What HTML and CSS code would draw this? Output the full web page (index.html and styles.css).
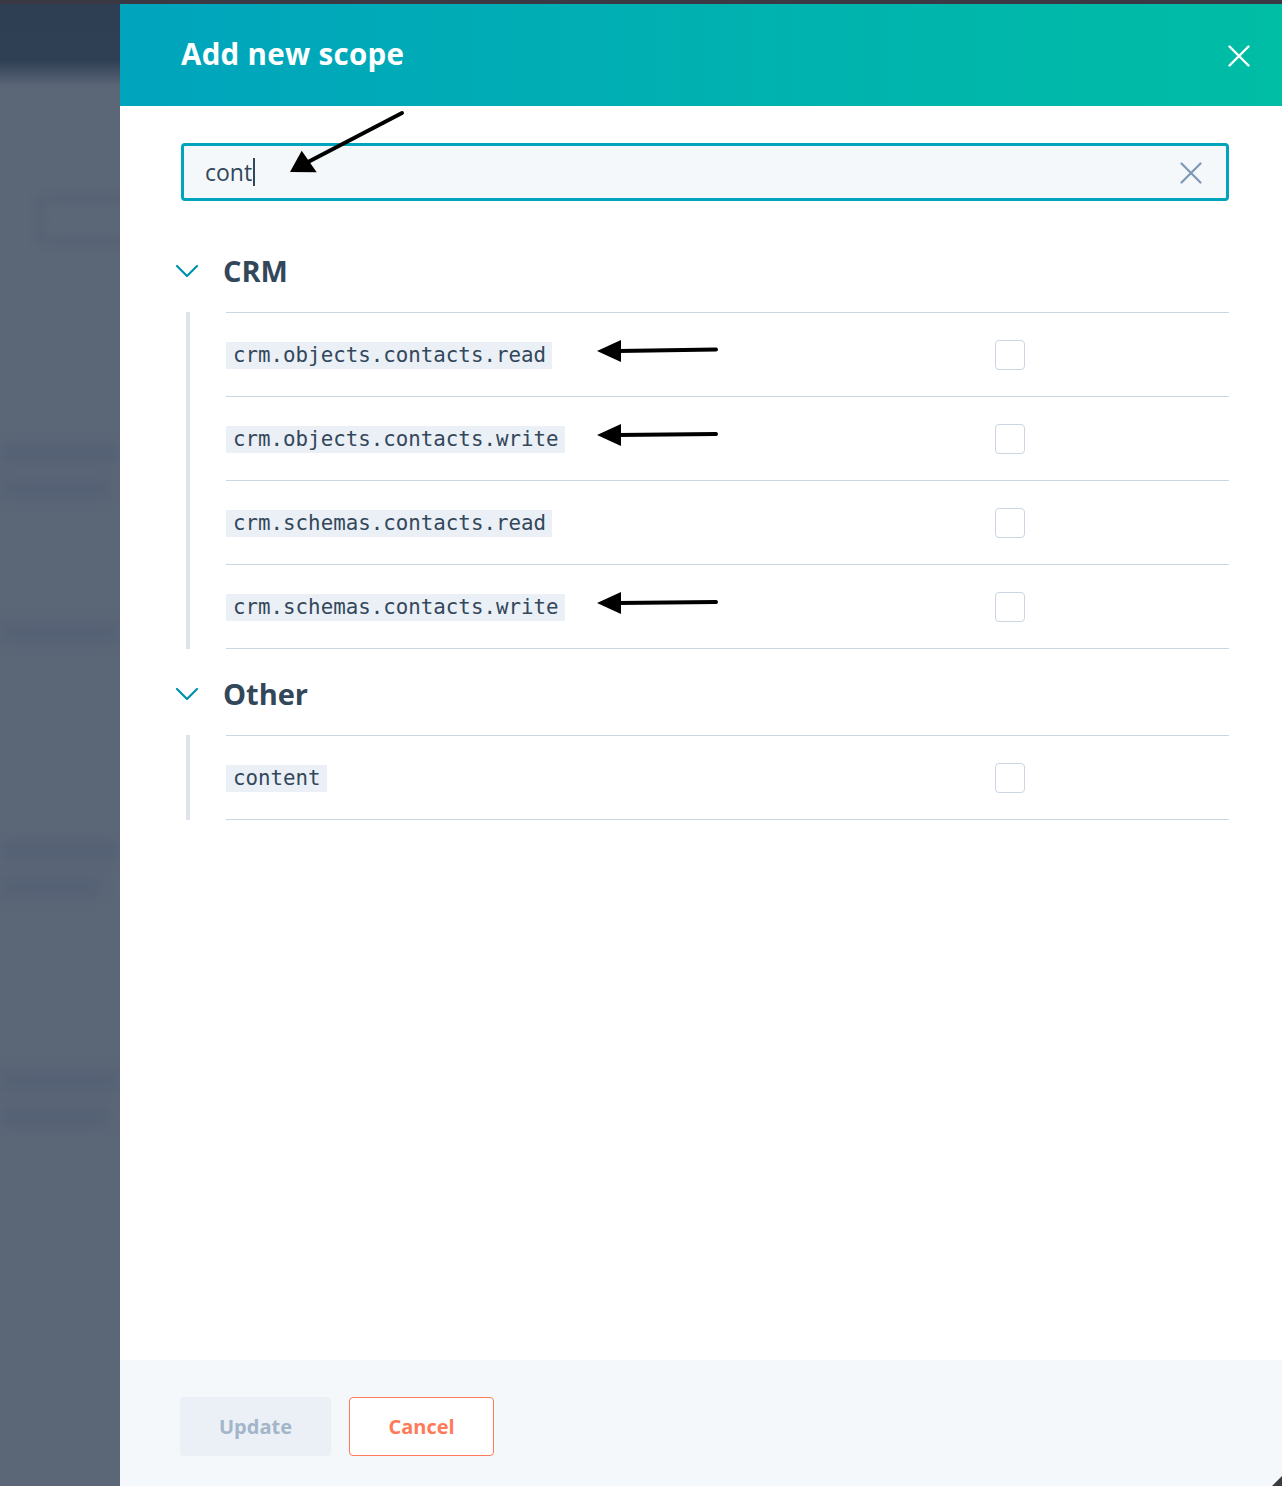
FILE: index.html
```html
<!DOCTYPE html>
<html lang="en">
<head>
<meta charset="utf-8">
<title>Add new scope</title>
<link rel="stylesheet" href="styles.css">
</head>
<body>
<div class="window-bar"></div>
<div class="screen">
  <aside class="backdrop" aria-hidden="true">
    <div class="ghost ghost-btn"></div>
    <div class="ghost ghost-line" style="width: 120px; margin-top: 203px"></div>
    <div class="ghost ghost-line" style="width: 110px; margin-top: 22px"></div>
    <div class="ghost ghost-line" style="width: 120px; margin-top: 130px"></div>
    <div class="ghost ghost-line" style="width: 120px; margin-top: 204px"></div>
    <div class="ghost ghost-line" style="width: 100px; margin-top: 22px"></div>
    <div class="ghost ghost-line" style="width: 120px; margin-top: 180px"></div>
    <div class="ghost ghost-line" style="width: 110px; margin-top: 22px"></div>
  </aside>

  <section class="modal">
    <header class="modal-header">
      <h1 class="modal-title">Add new scope</h1>
      <button class="icon-btn close-btn" type="button" aria-label="Close">
        <svg width="22" height="22" viewBox="0 0 22 22"><path d="M1.5 1.5 L20.5 20.5 M20.5 1.5 L1.5 20.5" stroke="#fff" stroke-width="2.4" stroke-linecap="round"/></svg>
      </button>
    </header>

    <div class="modal-body">
      <div class="search">
        <span class="search-value">cont</span><span class="caret"></span>
        <button class="icon-btn clear-btn" type="button" aria-label="Clear">
          <svg width="22" height="22" viewBox="0 0 22 22"><path d="M1.5 1.5 L20.5 20.5 M20.5 1.5 L1.5 20.5" stroke="#7c98b6" stroke-width="2.2" stroke-linecap="round"/></svg>
        </button>
        <svg class="callout callout-search" width="130" height="70" viewBox="0 0 130 70">
          <path d="M121 5 L27 54" stroke="#000" stroke-width="4" stroke-linecap="round"/>
          <path d="M9 64 L20.7 42.7 L35.7 64.3 Z" fill="#000"/>
        </svg>
      </div>

      <div class="group">
        <div class="group-head">
          <svg class="chevron" width="24" height="14" viewBox="0 0 24 14"><path d="M2 2 L12 12 L22 2" fill="none" stroke="#0091ae" stroke-width="2.2" stroke-linecap="round" stroke-linejoin="round"/></svg>
          <h2 class="group-title">CRM</h2>
        </div>
        <ul class="scope-list">
          <li class="scope-row">
            <code class="scope-code">crm.objects.contacts.read</code>
            <svg class="callout callout-row" width="124" height="28" viewBox="0 0 124 28"><path d="M22 14 L120 12.5" stroke="#000" stroke-width="4" stroke-linecap="round"/><path d="M1 14 L25 3 L25 25 Z" fill="#000"/></svg>
            <span class="checkbox"></span>
          </li>
          <li class="scope-row">
            <code class="scope-code">crm.objects.contacts.write</code>
            <svg class="callout callout-row" width="124" height="28" viewBox="0 0 124 28"><path d="M22 14 L120 13" stroke="#000" stroke-width="4" stroke-linecap="round"/><path d="M1 14 L25 3 L25 25 Z" fill="#000"/></svg>
            <span class="checkbox"></span>
          </li>
          <li class="scope-row">
            <code class="scope-code">crm.schemas.contacts.read</code>
            <span class="checkbox"></span>
          </li>
          <li class="scope-row">
            <code class="scope-code">crm.schemas.contacts.write</code>
            <svg class="callout callout-row" width="124" height="28" viewBox="0 0 124 28"><path d="M22 14 L120 13" stroke="#000" stroke-width="4" stroke-linecap="round"/><path d="M1 14 L25 3 L25 25 Z" fill="#000"/></svg>
            <span class="checkbox"></span>
          </li>
        </ul>
      </div>

      <div class="group">
        <div class="group-head">
          <svg class="chevron" width="24" height="14" viewBox="0 0 24 14"><path d="M2 2 L12 12 L22 2" fill="none" stroke="#0091ae" stroke-width="2.2" stroke-linecap="round" stroke-linejoin="round"/></svg>
          <h2 class="group-title">Other</h2>
        </div>
        <ul class="scope-list">
          <li class="scope-row">
            <code class="scope-code">content</code>
            <span class="checkbox"></span>
          </li>
        </ul>
      </div>
    </div>

    <footer class="modal-footer">
      <button class="btn btn-primary" type="button" disabled>Update</button>
      <button class="btn btn-secondary" type="button">Cancel</button>
      <svg class="resize-grip" width="10" height="10" viewBox="0 0 10 10"><path d="M10 0 L10 10 L0 10 Z" fill="#3a3a40"/></svg>
    </footer>
  </section>
</div>
</body>
</html>
```

FILE: styles.css
```css
* {
  box-sizing: border-box;
}

html, body {
  margin: 0;
  padding: 0;
}

body {
  width: 1282px;
  height: 1486px;
  overflow: hidden;
  background: #5b6677;
  font-family: "Open Sans", "Noto Sans", sans-serif;
  color: #33475b;
}

.window-bar {
  height: 4px;
  background: #3a3944;
}

.screen {
  display: flex;
  height: 1482px;
}

/* dimmed page behind the panel */
.backdrop {
  width: 120px;
  flex: none;
  overflow: hidden;
  background: linear-gradient(to bottom, #2e3e53 0, #2f3f54 56px, #5b6677 82px, #5b6677 100%);
}

.ghost {
  background: #536074;
  filter: blur(7px);
  border-radius: 6px;
}

.ghost-btn {
  margin: 193px 0 0 38px;
  height: 46px;
  width: 100px;
  background: transparent;
  border: 3px solid #525e70;
  filter: blur(4px);
}

.ghost-line {
  height: 14px;
}

.modal {
  flex: 1;
  display: flex;
  flex-direction: column;
  background: #fff;
  position: relative;
}

.modal-header {
  height: 102px;
  flex: none;
  display: flex;
  align-items: center;
  justify-content: space-between;
  padding: 0 32px 0 61px;
  background: linear-gradient(to right, #00a4bd, #00bda5);
}

.modal-title {
  margin: 0;
  color: #fff;
  font-size: 29.5px;
  font-weight: 700;
  letter-spacing: 0.3px;
  line-height: 1;
  padding-bottom: 2px;
}

.icon-btn {
  border: 0;
  padding: 0;
  background: none;
  display: flex;
  cursor: pointer;
}

.close-btn {
  margin-top: 2px;
}

.modal-body {
  flex: 1;
  padding: 37px 53px 0 61px;
}

.search {
  position: relative;
  height: 58px;
  display: flex;
  align-items: center;
  padding: 0 24px 0 21px;
  background: #f5f8fa;
  border: 3px solid #00a4bd;
  border-radius: 4px;
}

.search-value {
  font-size: 23px;
  color: #33475b;
  line-height: 1;
}

.caret {
  width: 2px;
  height: 28px;
  margin-left: 1px;
  background: #33475b;
}

.clear-btn {
  margin-left: auto;
  margin-top: 2px;
}

.callout {
  position: absolute;
  pointer-events: none;
}

.callout-search {
  left: 97px;
  top: -38px;
}

.group {
  padding-top: 19px;
}

.search + .group {
  padding-top: 44px;
}

.group-head {
  height: 50px;
  display: flex;
  align-items: center;
  margin-left: -6px;
}

.chevron {
  margin-top: 1px;
}

.group-title {
  margin: 0 0 0 24px;
  font-size: 29px;
  font-weight: 700;
  line-height: 1;
  color: #33475b;
}

.scope-list {
  list-style: none;
  margin: 17px 0 0 5px;
  padding: 0 0 0 36px;
  border-left: 4px solid #dfe3eb;
}

.scope-row {
  position: relative;
  height: 84px;
  display: grid;
  grid-template-columns: 769px 29px 1fr;
  align-items: center;
  border-top: 1px solid #cbd6e2;
}

.scope-row:last-child {
  height: 85px;
  border-bottom: 1px solid #cbd6e2;
}

.scope-code {
  justify-self: start;
  font-family: "DejaVu Sans Mono", "Liberation Mono", monospace;
  font-size: 20.8px;
  line-height: 27px;
  padding: 0 6px 0 7px;
  background: #eaf0f6;
  color: #33475b;
  margin-top: 1px;
}

.callout-row {
  left: 370px;
  top: 24px;
}

.checkbox {
  grid-column: 2;
  width: 30px;
  height: 30px;
  border: 1px solid #cbd6e2;
  border-radius: 4px;
  background: #fff;
}

.modal-footer {
  position: relative;
  height: 126px;
  flex: none;
  display: flex;
  align-items: flex-start;
  gap: 18px;
  padding: 37px 0 0 60px;
  background: #f5f8fa;
}

.btn {
  height: 59px;
  border-radius: 4px;
  font-family: "Open Sans", "Noto Sans", sans-serif;
  font-size: 20px;
  font-weight: 700;
  padding: 0;
}

.btn-primary {
  width: 151px;
  border: 0;
  background: #eaf0f6;
  color: #a3b5c9;
}

.btn-secondary {
  width: 145px;
  border: 1px solid #ff7a59;
  background: #fff;
  color: #ff7a59;
}

.resize-grip {
  position: absolute;
  right: 0;
  bottom: 0;
}
```
